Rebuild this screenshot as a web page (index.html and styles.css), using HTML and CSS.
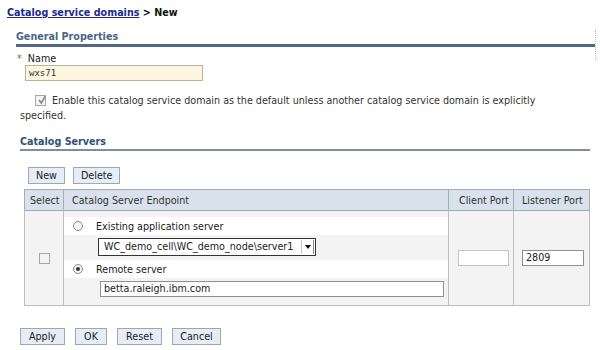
FILE: index.html
```html
<!DOCTYPE html>
<html lang="en">
<head>
  <meta charset="UTF-8">
  <title>Catalog service domains &gt; New</title>
  <link rel="stylesheet" href="styles.css">
</head>
<body>
  <div class="page">
    <div class="crumb"><a href="#" class="crumb-link">Catalog service domains</a> &gt; New</div>

    <div class="section">
      <h2 class="section-title">General Properties</h2>
      <div class="field">
        <div class="field-label"><span class="req">*</span> Name</div>
        <div class="text-input name-input">wxs71</div>
      </div>
      <p class="check-row">
        <span class="checkbox checked">
          <svg width="10" height="10" viewBox="0 0 10 10"><path d="M2 5 L4.2 8 L8.5 1" fill="none" stroke="#8a8a8a" stroke-width="1.6"/></svg>
        </span>Enable this catalog service domain as the default unless another catalog service domain is explicitly specified.
      </p>
    </div>

    <h2 class="servers-title">Catalog Servers</h2>
    <div class="toolbar">
      <button class="btn">New</button>
      <button class="btn">Delete</button>
    </div>

    <table class="servers">
      <colgroup>
        <col class="col-select">
        <col class="col-endpoint">
        <col class="col-client">
        <col class="col-listener">
      </colgroup>
      <thead>
        <tr>
          <th class="th-select">Select</th>
          <th class="th-endpoint">Catalog Server Endpoint</th>
          <th class="th-client">Client Port</th>
          <th class="th-listener">Listener Port</th>
        </tr>
      </thead>
      <tbody>
        <tr>
          <td class="select-cell"><span class="checkbox"></span></td>
          <td>
            <div class="endpoint">
              <div class="radio-row"><span class="radio"></span>Existing application server</div>
              <div class="select-row">
                <div class="select-box">WC_demo_cell\WC_demo_node\server1<span class="select-arrow"></span></div>
              </div>
              <div class="radio-row"><span class="radio on"></span>Remote server</div>
              <div class="input-row">
                <div class="text-input host-input">betta.raleigh.ibm.com</div>
              </div>
            </div>
          </td>
          <td><div class="text-input port-input client-input"></div></td>
          <td><div class="text-input port-input listener-input">2809</div></td>
        </tr>
      </tbody>
    </table>

    <div class="actions">
      <button class="btn btn-apply">Apply</button>
      <button class="btn btn-ok">OK</button>
      <button class="btn btn-reset">Reset</button>
      <button class="btn btn-cancel">Cancel</button>
    </div>
  </div>
  <div class="edge-marks"></div>
</body>
</html>
```

FILE: styles.css
```css
body {
  margin: 0;
  background: #ffffff;
  font-family: "DejaVu Sans", Verdana, sans-serif;
  font-size: 9.6px;
  color: #222;
}

.page {
  padding: 6px 0 0 7px;
  width: 588px;
}

.crumb {
  font-weight: bold;
  font-size: 9.6px;
  color: #111;
  line-height: 14px;
}

.crumb-link {
  color: #1c2a8e;
  text-decoration: underline;
}

.section {
  margin-top: 10px;
  padding-left: 9px;
}

.section-title {
  margin: 0;
  font-size: 9.6px;
  color: #4a6686;
  line-height: 14px;
  border-bottom: 3px solid #4f6888;
}

.field {
  margin-top: 6px;
}

.field-label {
  line-height: 12px;
  padding-left: 1px;
}

.req {
  color: #6b7d3a;
  margin-right: 3px;
}

.text-input {
  box-sizing: border-box;
  height: 16px;
  border: 1px solid #a9a9a9;
  background: #fff;
  line-height: 14px;
  padding-left: 3px;
}

.name-input {
  width: 178px;
  margin: 0 0 0 9px;
  background: #fdf5df;
  border-color: #b9b39a;
  font-family: "DejaVu Sans Mono", monospace;
  font-size: 9px;
  color: #333;
}

.check-row {
  margin: 12px 0 0 4px;
  text-indent: 15px;
  line-height: 15px;
  color: #333;
  width: 560px;
}

.checkbox {
  display: inline-block;
  box-sizing: border-box;
  width: 11px;
  height: 11px;
  border: 1px solid #a8a8a8;
  background: #f3f3f3;
  vertical-align: -2px;
  margin-right: 6px;
  text-indent: 0;
  position: relative;
}

.checkbox svg {
  position: absolute;
  left: 1px;
  top: -1px;
}

.servers-title {
  margin: 12px 0 0 13px;
  font-size: 9.6px;
  color: #2f5272;
  line-height: 14px;
  border-bottom: 2px solid #7d8e9c;
  width: 570px;
}

.toolbar {
  display: flex;
  gap: 8px;
  margin: 16px 0 0 21px;
}

.btn {
  box-sizing: border-box;
  height: 17px;
  padding: 0 7px;
  border: 1px solid #9ea6ae;
  background: #e5edf7;
  font-family: "DejaVu Sans", Verdana, sans-serif;
  font-size: 9.6px;
  color: #222;
  line-height: 15px;
}

.servers {
  margin: 5px 0 0 17px;
  border-collapse: collapse;
  table-layout: fixed;
  width: 565px;
  border: 1px solid #a2adb8;
}

.col-select { width: 39px; }
.col-endpoint { width: 385px; }
.col-client { width: 65px; }
.col-listener { width: 76px; }

.servers th {
  height: 20px;
  padding: 0 0 0 5px;
  background: #d9e2ec;
  border: 1px solid #a2adb8;
  font-weight: normal;
  text-align: left;
  color: #333;
  white-space: nowrap;
  overflow: hidden;
}

.servers th.th-endpoint { padding-left: 8px; }
.servers th.th-client { padding-left: 10px; }
.servers th.th-listener { padding-left: 8px; }

.servers td {
  background: #f3f3f3;
  border: 1px solid #b5bfc8;
  vertical-align: middle;
  padding: 0;
}

.select-cell {
  text-align: center;
}

.select-cell .checkbox {
  margin: 0;
}

.endpoint {
  display: flex;
  flex-direction: column;
  padding: 6px 0 4px 0;
}

.radio-row {
  display: flex;
  align-items: center;
  height: 18px;
  padding-left: 9px;
  background: #fff;
}

.radio {
  box-sizing: border-box;
  width: 10px;
  height: 10px;
  border-radius: 50%;
  border: 1px solid #8c8c8c;
  background: #f4f4f4;
  margin-right: 13px;
  position: relative;
}

.radio.on::after {
  content: "";
  position: absolute;
  left: 2px;
  top: 2px;
  width: 4px;
  height: 4px;
  border-radius: 50%;
  background: #333;
}

.select-row,
.input-row {
  padding: 3px 0 4px 34px;
}

.select-box {
  box-sizing: border-box;
  width: 218px;
  height: 18px;
  border: 1px solid #333;
  background: #fff;
  line-height: 16px;
  padding-left: 5px;
  position: relative;
}

.select-arrow {
  position: absolute;
  right: 1px;
  top: 1px;
  width: 13px;
  height: 14px;
  border-left: 1px solid #c8c8c8;
  border-right: 1px solid #888;
  box-sizing: border-box;
}

.select-arrow::after {
  content: "";
  position: absolute;
  left: 3px;
  top: 5px;
  border-top: 4px solid #111;
  border-left: 3px solid transparent;
  border-right: 3px solid transparent;
}

.host-input {
  width: 344px;
  margin-left: 2px;
  border-color: #8f8f8f;
}

.port-input {
  height: 16px;
}

.client-input {
  width: 51px;
  margin-left: 9px;
  border-color: #c4c4c4;
}

.listener-input {
  width: 62px;
  margin-left: 8px;
  border-color: #8f8f8f;
}

.actions {
  display: flex;
  gap: 10px;
  margin: 22px 0 0 13px;
}

.btn-apply { width: 45px; }
.btn-ok { width: 32px; }
.btn-reset { width: 45px; }
.btn-cancel { width: 49px; }

.edge-marks {
  position: absolute;
  left: 595px;
  top: 30px;
  width: 1px;
  height: 30px;
  border-left: 1px dotted #bbb;
}
```
